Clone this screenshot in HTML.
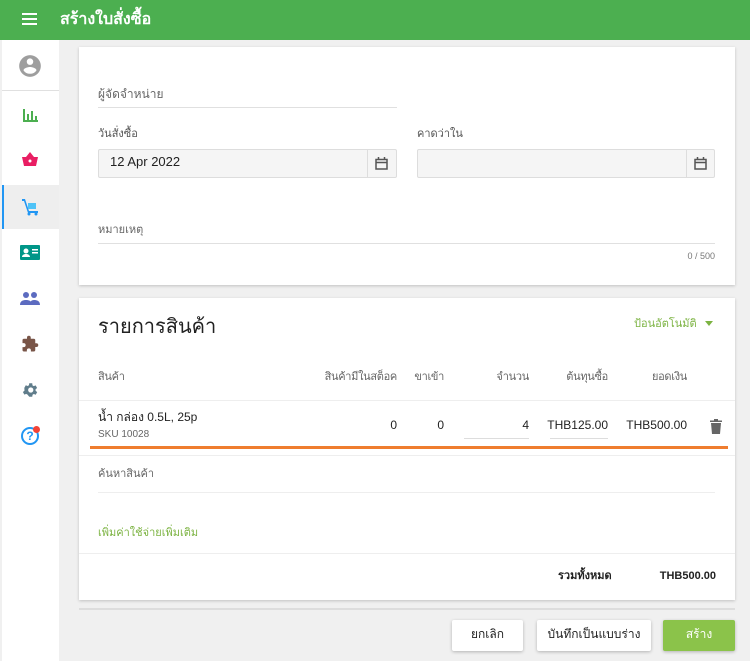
<!DOCTYPE html>
<html><head><meta charset="utf-8"><style>
*{box-sizing:border-box;margin:0;padding:0}
body{width:750px;height:661px;overflow:hidden;background:#f0f0f0;font-family:"Liberation Sans","DejaVu Sans",sans-serif;color:#222;position:relative}
.a{position:absolute}
.hdr{left:0;top:0;width:750px;height:40px;background:#4caf50}
.side{left:2px;top:40px;width:57px;height:621px;background:#fff}
.card{background:#fff;box-shadow:0 1px 3px rgba(0,0,0,.2)}
.lbl{font-size:11px;color:#555}
.line{height:1px;background:#e0e0e0}
.inp{background:#f5f5f5;border:1px solid #ddd;border-radius:2px}
.th{font-size:11px;color:#666;top:367px;text-align:right;letter-spacing:-0.3px}
.r{text-align:right}
.btn{background:#fff;box-shadow:0 1px 3px rgba(0,0,0,.25);border-radius:2px;font-size:12px;text-align:center;line-height:29px;top:620px;height:31px}
</style></head><body>
<div class="a hdr"></div>
<div class="a" style="left:22px;top:13px;width:15px;height:2px;background:#fff;box-shadow:0 5px 0 #fff,0 10px 0 #fff"></div>
<div class="a" style="left:60px;top:7px;color:#fff;font-size:16px;font-weight:bold">สร้างใบสั่งซื้อ</div>
<div class="a side"></div>
<div class="a" style="left:2px;top:90px;width:57px;height:1px;background:#e0e0e0"></div>
<div class="a" style="left:2px;top:185px;width:57px;height:44px;background:#eee;border-left:2px solid #2196f3"></div>
<svg class="a" style="left:17px;top:53px" width="26" height="26" viewBox="0 0 24 24"><path fill="#9e9e9e" d="M12 2a10 10 0 100 20 10 10 0 000-20zm0 3a3 3 0 110 6 3 3 0 010-6zm0 14.2a7.2 7.2 0 01-6-3.2c0-2 4-3.1 6-3.1s6 1.1 6 3.1a7.2 7.2 0 01-6 3.2z"/></svg>
<svg class="a" style="left:22px;top:107px" width="16" height="16" viewBox="0 0 16 16"><path fill="#4caf50" d="M1 2h2v12H1zM5 7h2v7H5zM9 4h2v10H9zM13 9h2v5h-2zM1 13h15v2H1z"/></svg>
<svg class="a" style="left:21px;top:151px" width="18" height="16" viewBox="0 0 18 16"><path fill="#e91e63" d="M5 6L9 1l4 5h4l-2 9H3L1 6z"/><circle cx="9" cy="10" r="1.5" fill="#fff"/></svg>
<svg class="a" style="left:21px;top:197px" width="19" height="19" viewBox="0 0 19 19"><path fill="#2196f3" d="M1 2h3l4 12h9v2H7L3 4H1z"/><rect x="7" y="6" width="8" height="6" fill="#4fc3f7"/><circle cx="8" cy="17" r="1.5" fill="#2196f3"/><circle cx="15" cy="17" r="1.5" fill="#2196f3"/></svg>
<svg class="a" style="left:20px;top:245px" width="20" height="15" viewBox="0 0 20 15"><rect width="20" height="15" rx="1" fill="#009688"/><circle cx="6" cy="6" r="2.5" fill="#fff"/><path fill="#fff" d="M2 12c0-2 2-3 4-3s4 1 4 3zM12 4h6v1.5h-6zM12 7h6v1.5h-6z"/></svg>
<svg class="a" style="left:20px;top:291px" width="20" height="14" viewBox="0 0 20 14"><circle cx="6" cy="4" r="3" fill="#5c6bc0"/><circle cx="14" cy="4" r="3" fill="#5c6bc0"/><path fill="#5c6bc0" d="M0 14c0-4 3-5 6-5s6 1 6 5zM10 14c0-3 1-5 4-5s6 1 6 5z"/></svg>
<svg class="a" style="left:21px;top:335px" width="18" height="18" viewBox="0 0 24 24"><path fill="#795548" d="M20.5 11H19V7a2 2 0 00-2-2h-4V3.5a2.5 2.5 0 00-5 0V5H4a2 2 0 00-2 2v3.8h1.5a2.7 2.7 0 010 5.4H2V20a2 2 0 002 2h3.8v-1.5a2.7 2.7 0 015.4 0V22H17a2 2 0 002-2v-4h1.5a2.5 2.5 0 000-5z"/></svg>
<svg class="a" style="left:21px;top:381px" width="18" height="18" viewBox="0 0 24 24"><path fill="#607d8b" d="M19.4 13a7.5 7.5 0 000-2l2.1-1.6-2-3.5-2.5 1a7 7 0 00-1.7-1L15 3h-4l-.4 2.7a7 7 0 00-1.7 1l-2.5-1-2 3.5L4.6 11a7.5 7.5 0 000 2l-2.1 1.6 2 3.5 2.5-1a7 7 0 001.7 1L11 21h4l.4-2.7a7 7 0 001.7-1l2.5 1 2-3.5zM13 15.5a3.5 3.5 0 110-7 3.5 3.5 0 010 7z"/></svg>
<div class="a" style="left:21px;top:427px;width:18px;height:18px;border:2px solid #2196f3;border-radius:50%;color:#2196f3;font-size:12px;font-weight:bold;text-align:center;line-height:14px">?</div>
<div class="a" style="left:33px;top:426px;width:7px;height:7px;border-radius:50%;background:#f44336"></div>

<div class="a card" style="left:79px;top:47px;width:656px;height:238px"></div>
<div class="a lbl" style="left:98px;top:85px;font-size:12px;color:#666">ผู้จัดจำหน่าย</div>
<div class="a line" style="left:98px;top:107px;width:299px"></div>
<div class="a lbl" style="left:98px;top:124px">วันสั่งซื้อ</div>
<div class="a lbl" style="left:417px;top:124px">คาดว่าใน</div>
<div class="a inp" style="left:98px;top:149px;width:299px;height:29px"></div>
<div class="a inp" style="left:417px;top:149px;width:298px;height:29px"></div>
<div class="a" style="left:110px;top:154px;font-size:13px">12 Apr 2022</div>
<div class="a" style="left:367px;top:149px;width:1px;height:29px;background:#ddd"></div>
<div class="a" style="left:686px;top:149px;width:1px;height:29px;background:#ddd"></div>
<svg class="a" style="left:375px;top:157px" width="13" height="13" viewBox="0 0 13 13"><path fill="none" stroke="#555" stroke-width="1.5" d="M1 2.5h11v9.5H1zM1 5.5h11M3.5 0v3M9.5 0v3"/></svg>
<svg class="a" style="left:694px;top:157px" width="13" height="13" viewBox="0 0 13 13"><path fill="none" stroke="#555" stroke-width="1.5" d="M1 2.5h11v9.5H1zM1 5.5h11M3.5 0v3M9.5 0v3"/></svg>
<div class="a lbl" style="left:98px;top:220px;color:#666">หมายเหตุ</div>
<div class="a line" style="left:98px;top:243px;width:617px"></div>
<div class="a" style="left:660px;top:251px;width:55px;text-align:right;font-size:9px;color:#777">0 / 500</div>

<div class="a card" style="left:79px;top:298px;width:656px;height:302px"></div>
<div class="a" style="left:98px;top:310px;font-size:20px">รายการสินค้า</div>
<div class="a" style="left:634px;top:314px;font-size:11px;color:#7cb342">ป้อนอัตโนมัติ</div>
<div class="a" style="left:705px;top:321px;border:4px solid transparent;border-top:5px solid #7cb342"></div>
<div class="a th" style="left:98px;text-align:left">สินค้า</div>
<div class="a th" style="left:300px;width:97px">สินค้ามีในสต็อค</div>
<div class="a th" style="left:400px;width:44px">ขาเข้า</div>
<div class="a th" style="left:470px;width:59px">จำนวน</div>
<div class="a th" style="left:540px;width:68px">ต้นทุนซื้อ</div>
<div class="a th" style="left:610px;width:77px">ยอดเงิน</div>
<div class="a line" style="left:79px;top:400px;width:656px;background:#eee"></div>
<div class="a" style="left:98px;top:408px;font-size:12px">น้ำ กล่อง 0.5L, 25p</div>
<div class="a" style="left:98px;top:429px;font-size:10px;color:#666">SKU 10028</div>
<div class="a r" style="left:360px;width:37px;top:418px;font-size:12px">0</div>
<div class="a r" style="left:410px;width:34px;top:418px;font-size:12px">0</div>
<div class="a r" style="left:480px;width:49px;top:418px;font-size:12px">4</div>
<div class="a line" style="left:464px;top:438px;width:65px;background:#ddd"></div>
<div class="a r" style="left:540px;width:68px;top:418px;font-size:12px">THB125.00</div>
<div class="a line" style="left:550px;top:438px;width:58px;background:#ddd"></div>
<div class="a r" style="left:610px;width:77px;top:418px;font-size:12px">THB500.00</div>
<svg class="a" style="left:710px;top:419px" width="12" height="15" viewBox="0 0 12 15"><path fill="#666" d="M1 4h10l-1 11H2zM0 1.5h12V3H0zM4 0h4v1.5H4z"/></svg>
<div class="a" style="left:90px;top:446px;width:638px;height:3px;background:#ef7d2f"></div>
<div class="a line" style="left:79px;top:455px;width:656px;background:#eee"></div>
<div class="a lbl" style="left:98px;top:464px;color:#666">ค้นหาสินค้า</div>
<div class="a line" style="left:98px;top:492px;width:617px;background:#eee"></div>
<div class="a" style="left:98px;top:523px;font-size:11px;color:#7cb342">เพิ่มค่าใช้จ่ายเพิ่มเติม</div>
<div class="a line" style="left:79px;top:553px;width:656px;background:#eee"></div>
<div class="a" style="left:558px;top:566px;font-size:11px;font-weight:bold">รวมทั้งหมด</div>
<div class="a r" style="left:640px;width:76px;top:570px;font-size:11px;font-weight:bold">THB500.00</div>
<div class="a" style="left:79px;top:608px;width:656px;height:2px;background:#ddd"></div>
<div class="a btn" style="left:452px;width:71px">ยกเลิก</div>
<div class="a btn" style="left:537px;width:114px">บันทึกเป็นแบบร่าง</div>
<div class="a btn" style="left:663px;width:72px;background:#8bc34a;color:#fff">สร้าง</div>
</body></html>
